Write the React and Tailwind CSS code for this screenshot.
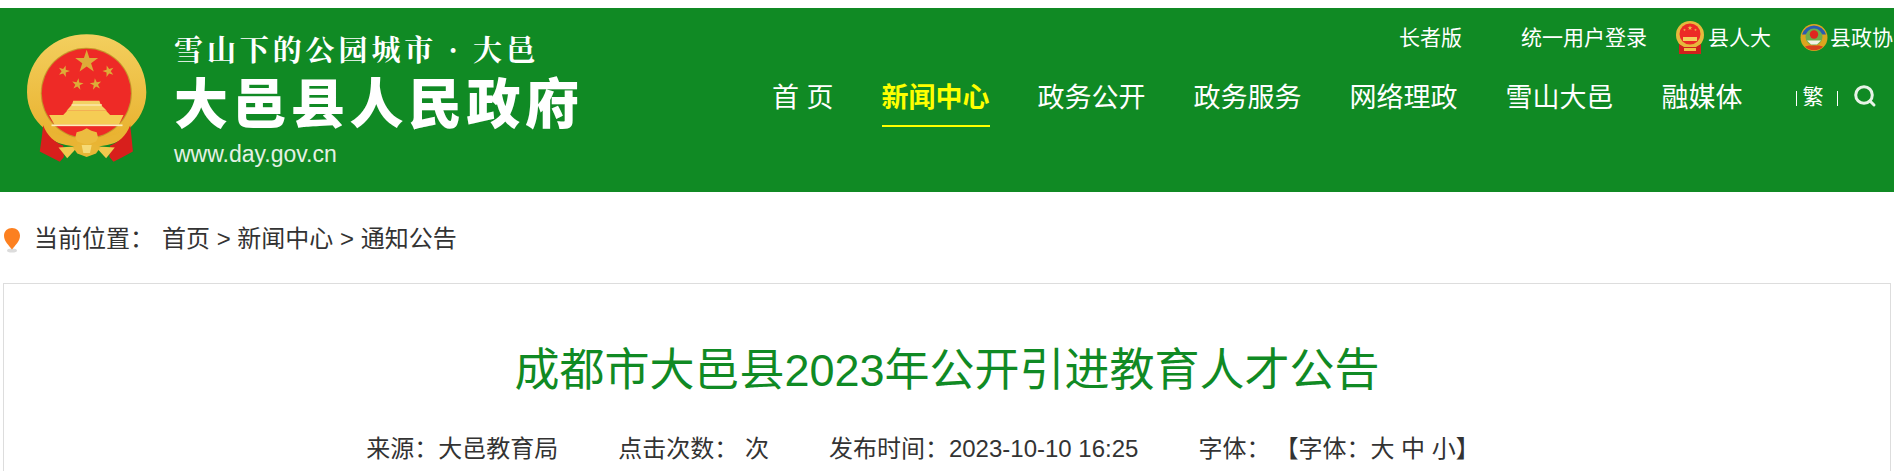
const FONT = '[font-family:"Liberation_Sans","Noto_Sans_CJK_SC",sans-serif]';

function star(cx, cy, r, rot = 0) {
  const pts = [];
  for (let i = 0; i < 10; i++) {
    const rad = i % 2 === 0 ? r : r * 0.382;
    const a = -Math.PI / 2 + rot + (i * Math.PI) / 5;
    pts.push(`${(cx + rad * Math.cos(a)).toFixed(1)},${(cy + rad * Math.sin(a)).toFixed(1)}`);
  }
  return pts.join(" ");
}

function Emblem({ className }) {
  return (
    <svg viewBox="50 38 362 385" className={className}>
      <defs>
        <linearGradient id="g1" x1="0" y1="0" x2="0" y2="1">
          <stop offset="0" stopColor="#f3cf5e" />
          <stop offset="1" stopColor="#e8b02c" />
        </linearGradient>
      </defs>
      <path d="M230 42 C325 42 408 110 408 215 C408 262 385 300 358 322 L345 345 L230 372 L115 345 L102 322 C75 300 52 262 52 215 C52 110 135 42 230 42Z" fill="url(#g1)" />
      <circle cx="229" cy="218" r="136" fill="#c6962a" />
      <circle cx="229" cy="218" r="133" fill="#ee2a26" />
      <g fill="#ddac38">
        <polygon points={star(230, 124, 36)} />
        <polygon points={star(162, 152, 18, 0.3)} />
        <polygon points={star(295, 152, 18, -0.3)} />
        <polygon points={star(203, 191, 18, 0.15)} />
        <polygon points={star(257, 191, 18, -0.15)} />
      </g>
      <path d="M186 252 L170 270 H290 L272 252 L268 240 H190Z" fill="#f3d163" />
      <rect x="185" y="250" width="90" height="6" fill="#f9e39a" />
      <path d="M172 270 H288 L300 283 H340 L326 312 H134 L118 283 H160Z" fill="#f5cc54" />
      <rect x="125" y="311" width="212" height="5" fill="#fdeeba" />
      <path d="M106 316 C130 345 185 352 230 352 C275 352 328 345 354 316 L358 335 C330 372 275 378 230 378 C185 378 130 372 102 335Z" fill="#e9b433" />
      <path d="M100 313 C112 345 135 364 160 374 L162 408 L150 422 L122 408 L90 392 L96 350Z" fill="#d81f1c" />
      <path d="M360 313 C348 345 325 364 300 374 L298 408 L310 422 L338 408 L368 392 L364 350Z" fill="#d81f1c" />
      <path d="M146 380 L205 376 L172 412Z" fill="#f0c94d" />
      <path d="M314 380 L255 376 L288 412Z" fill="#f0c94d" />
      <path d="M230 322 L244 330 L260 334 L264 350 L258 362 L232 372 L202 362 L196 350 L200 334 L216 330Z" fill="#ecbc40" />
      <path d="M188 378 L205 370 H255 L272 378 L258 398 L230 408 L202 398Z" fill="#e8b636" />
      <path d="M215 372 H245 L240 396 H220Z" fill="#f6da76" />
    </svg>
  );
}

function SmallEmblem() {
  return (
    <svg viewBox="0 0 30 34" className="w-[30px] h-[34px] shrink-0">
      <circle cx="15" cy="14" r="14" fill="#e6b93c" />
      <circle cx="15" cy="13" r="10.5" fill="#ec2b26" />
      <polygon points={star(15, 7, 2.6)} fill="#eec14a" />
      <polygon points={star(9.5, 9, 1.4)} fill="#eec14a" />
      <polygon points={star(20.5, 9, 1.4)} fill="#eec14a" />
      <rect x="8" y="16" width="14" height="4" fill="#f3cf5c" />
      <path d="M4 23 L9 26 L21 26 L26 23 L26 33 L4 33Z" fill="#cf211c" />
      <rect x="9" y="27" width="12" height="3" fill="#efc043" />
    </svg>
  );
}

function CppccEmblem() {
  return (
    <svg viewBox="0 0 28 28" className="w-[28px] h-[29px] shrink-0">
      <circle cx="14" cy="14" r="13.5" fill="#dba51f" />
      <path d="M2 11 A12.5 12.5 0 0 1 26 11 L21 11 A8 8 0 0 0 7 11Z" fill="#2a5bb0" />
      <circle cx="14" cy="13.5" r="8.5" fill="#6fae4a" />
      <circle cx="14" cy="11" r="4.2" fill="#e0261f" />
      <path d="M7 17 H21 L17 21 H11Z" fill="#f4f1e4" />
      <path d="M5 23 C9 28 19 28 23 23 L19 22 H9Z" fill="#d8401e" />
    </svg>
  );
}

function Pin({ className }) {
  return (
    <svg viewBox="0 0 18 26" className={className}>
      <ellipse cx="9" cy="23.5" rx="5" ry="2" fill="#dcdcdc" />
      <path d="M9 22.5 C6 18.5 1 14.5 1 8.8 C1 4 4.6 1 9 1 C13.4 1 17 4 17 8.8 C17 14.5 12 18.5 9 22.5Z" fill="#fc8020" />
    </svg>
  );
}

const NAV = [
  ["首 页", false],
  ["新闻中心", true],
  ["政务公开", false],
  ["政务服务", false],
  ["网络理政", false],
  ["雪山大邑", false],
  ["融媒体", false],
];

export default function App() {
  return (
    <div className={`${FONT} w-[1894px] h-[471px] overflow-hidden bg-white text-[#333] pt-2`}>
      <header className="h-[184px] bg-[#108a24] flex text-white overflow-hidden">
        <div className="w-[772px] shrink-0 flex pl-[26px] pt-[25px]">
          <Emblem className="w-[122px] h-[129px] shrink-0" />
          <div className="ml-[26px] flex flex-col">
            <div className='[font-family:"Noto_Serif_CJK_SC","Noto_Sans_CJK_SC",serif] font-bold text-[29px] leading-[32px] tracking-[3.9px] whitespace-nowrap'>
              雪山下的公园城市 · 大邑
            </div>
            <div className="font-black text-[54px] leading-[58px] tracking-[4.5px] whitespace-nowrap mt-[7px] [font-family:'Noto_Sans_CJK_SC',sans-serif]">
              大邑县人民政府
            </div>
            <div className="text-[23px] leading-[24px] text-[#e4f1e4] mt-[12px] font-['Liberation_Sans']">
              www.day.gov.cn
            </div>
          </div>
        </div>
        <div className="flex-1 flex flex-col min-w-0">
          <div className="h-[43px] mt-[8px] flex items-center text-[21px] whitespace-nowrap pl-[627px]">
            <span className="w-[122px] shrink-0">长者版</span>
            <span className="w-[154px] shrink-0">统一用户登录</span>
            <SmallEmblem />
            <span className="ml-[3px] w-[92px] shrink-0">县人大</span>
            <CppccEmblem />
            <span className="ml-[2px]">县政协</span>
          </div>
          <nav className="flex items-start mt-[19px]">
            <div className="flex gap-[48px] text-[27px] leading-[40px] whitespace-nowrap">
              {NAV.map(([t, active]) => (
                <a
                  key={t}
                  className={active ? "h-[49px] border-b-2 border-[#ffff00] text-[#ffff00] font-bold" : "h-[49px]"}
                >
                  {t}
                </a>
              ))}
            </div>
            <div className="ml-[53px] flex items-center h-[38px] text-[21px]">
              <span className="w-px h-[15px] bg-white mt-[2px]" />
              <span className="ml-[6px]">繁</span>
              <span className="ml-[13px] w-px h-[15px] bg-white mt-[2px]" />
              <svg viewBox="0 0 24 24" className="ml-[15px] w-[24px] h-[24px] -mt-[2px]" fill="none" stroke="#e8f3e8" strokeWidth="3" strokeLinecap="round">
                <circle cx="11" cy="11" r="8.3" />
                <path d="M17 17 L21 21" />
              </svg>
            </div>
          </nav>
        </div>
      </header>
      <div className="h-[91px] flex items-center pl-[3px] text-[24px] whitespace-nowrap pt-[2px]">
        <Pin className="w-[18px] h-[26px] mt-[2px]" />
        <span className="ml-[13px]">当前位置：</span>
        <span className="ml-[8px]">首页 &gt; 新闻中心 &gt; 通知公告</span>
      </div>
      <main className="mx-[3px] h-[300px] border border-[#ddd]">
        <h1 className="text-center text-[45px] leading-[60px] font-normal text-[#108a24] mt-[57px]">
          成都市大邑县2023年公开引进教育人才公告
        </h1>
        <div className="mt-[32px] flex justify-center gap-[60px] pr-[48px] text-[24px] leading-[32px] whitespace-nowrap">
          <span>来源：大邑教育局</span>
          <span>点击次数： 次</span>
          <span>发布时间：2023-10-10 16:25</span>
          <span>字体：<span className="ml-[16px]">【字体：大 中 小】</span></span>
        </div>
      </main>
    </div>
  );
}
